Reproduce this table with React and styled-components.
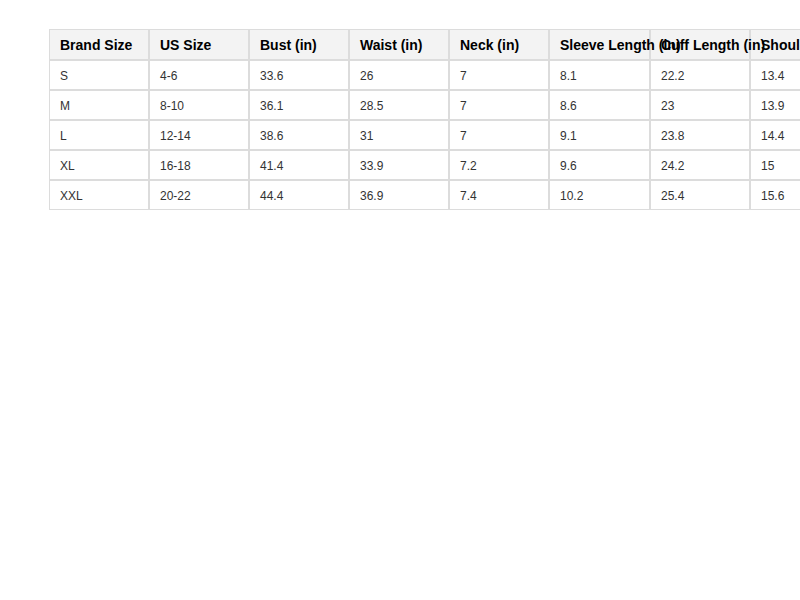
import React from 'react'
import styled, { createGlobalStyle } from 'styled-components'

const Global = createGlobalStyle`
  body {
    margin: 0;
    background: #fff;
    font-family: 'Liberation Sans', Arial, sans-serif;
  }
`;

const Wrap = styled.div`
  padding: 29px 0 0 49px;
  width: 800px;
  height: 600px;
  box-sizing: border-box;
  overflow: hidden;
`;

const Table = styled.table`
  border-collapse: separate;
  border-spacing: 0;
  table-layout: fixed;
  width: 801px;
`;

const Head = styled.th`
  width: ${p => p.w || 100}px;
  box-sizing: border-box;
  height: 31px;
  padding: 1px 10px 0;
  border: 1px solid #dcdcdc;
  background: #f3f3f3;
  text-align: left;
  font-size: 14px;
  font-weight: bold;
  color: #000;
  white-space: nowrap;
`;

const Cell = styled.td`
  box-sizing: border-box;
  height: 30px;
  padding: 1px 10px 0;
  border: 1px solid #dcdcdc;
  font-size: 12px;
  color: #333;
  white-space: nowrap;
`;

const heads = ['Brand Size', 'US Size', 'Bust (in)', 'Waist (in)', 'Neck (in)', 'Sleeve Length (in)', 'Cuff Length (in)', 'Shoulder (in)'];

const rows = [
  ['S', '4-6', '33.6', '26', '7', '8.1', '22.2', '13.4'],
  ['M', '8-10', '36.1', '28.5', '7', '8.6', '23', '13.9'],
  ['L', '12-14', '38.6', '31', '7', '9.1', '23.8', '14.4'],
  ['XL', '16-18', '41.4', '33.9', '7.2', '9.6', '24.2', '15'],
  ['XXL', '20-22', '44.4', '36.9', '7.4', '10.2', '25.4', '15.6'],
];

export default function App() {
  return (
    <Wrap>
      <Global />
      <Table>
        <thead>
          <tr>
            {heads.map((h, i) => (
              <Head key={h} w={i === 5 ? 101 : 100}>{h}</Head>
            ))}
          </tr>
        </thead>
        <tbody>
          {rows.map(r => (
            <tr key={r[0]}>
              {r.map((c, i) => <Cell key={i}>{c}</Cell>)}
            </tr>
          ))}
        </tbody>
      </Table>
    </Wrap>
  )
}
